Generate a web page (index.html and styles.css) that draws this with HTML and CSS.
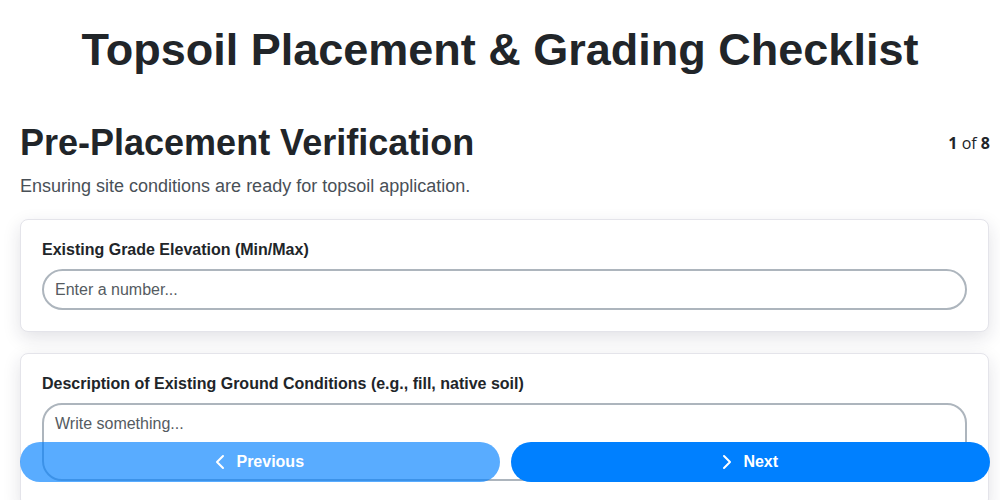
FILE: index.html
```
<!DOCTYPE html>
<html lang="en">
<head>
  <meta charset="UTF-8">
  <meta name="viewport" content="width=device-width, initial-scale=1.0">
  <title>Topsoil Placement &amp; Grading Checklist</title>
  <link rel="stylesheet" href="styles.css">
</head>
<body>
  <h1 class="page-title">Topsoil Placement &amp; Grading Checklist</h1>

  <div class="wizard">
    <!-- Section header -->
    <div class="section-head">
      <h2>Pre-Placement Verification</h2>
      <span class="step-count"><b>1</b> of <b>8</b></span>
    </div>
    <p class="section-desc">Ensuring site conditions are ready for topsoil application.</p>

    <!-- Questions -->
    <div class="card">
      <label for="gradeElevation">Existing Grade Elevation (Min/Max)</label>
      <input type="text" id="gradeElevation" placeholder="Enter a number...">
    </div>

    <div class="card">
      <label for="groundConditions">Description of Existing Ground Conditions (e.g., fill, native soil)</label>
      <textarea id="groundConditions" placeholder="Write something..."></textarea>
    </div>
  </div>

  <!-- Navigation -->
  <div class="nav-buttons">
    <button class="btn btn-prev" disabled>
      <svg width="10" height="16" viewBox="0 0 10 16"><polyline points="8,2 2,8 8,14" fill="none" stroke="#fff" stroke-width="2" stroke-linecap="round" stroke-linejoin="round"/></svg>
      Previous
    </button>
    <button class="btn btn-next">
      <svg width="10" height="16" viewBox="0 0 10 16"><polyline points="2,2 8,8 2,14" fill="none" stroke="#fff" stroke-width="2" stroke-linecap="round" stroke-linejoin="round"/></svg>
      Next
    </button>
  </div>
</body>
</html>
```

FILE: styles.css
```
body {
  font-family: "Liberation Sans", Arial, sans-serif;
  margin: 0;
  background: #fff;
  color: #212529;
}

.page-title {
  text-align: center;
  font-size: 45px;
  margin: 0;
  padding: 25px 0 0;
  line-height: 50px;
}

.wizard {
  margin-top: 46px;
  padding: 0 10px 0 20px;
}

.section-head {
  display: flex;
  justify-content: space-between;
  align-items: center;
}
.section-head h2 {
  font-size: 36px;
  margin: 0;
  line-height: 44px;
}
.step-count {
  font-family: "Open Sans", sans-serif;
  font-size: 16px;
  color: #212529;
}

.section-desc {
  font-size: 18px;
  color: #495057;
  margin: 11px 0 22px;
}

.card {
  background: #fff;
  border: 1px solid #e4e4ea;
  border-radius: 8px;
  padding: 21px;
  margin: 0 1px 21px 0;
  box-shadow: 0 6px 18px rgba(30, 30, 60, 0.13);
}
.card label {
  display: block;
  font-weight: bold;
  font-size: 16px;
  line-height: 18px;
  margin-bottom: 10px;
}

input, textarea {
  width: 100%;
  box-sizing: border-box;
  font-family: "Liberation Sans", Arial, sans-serif;
  font-size: 16px;
  color: #212529;
  border: 2px solid #adb5bd;
  background: #fff;
}
input {
  height: 41px;
  border-radius: 999px;
  padding: 0 11px;
}
textarea {
  height: 78px;
  border-radius: 20px;
  padding: 10px 11px;
  resize: none;
}
::placeholder {
  color: #555b61;
}

.nav-buttons {
  position: fixed;
  left: 20px;
  right: 10px;
  bottom: 18px;
  display: flex;
  gap: 11px;
}
.btn {
  flex: 1;
  height: 40px;
  border: none;
  border-radius: 999px;
  background: #0080ff;
  color: #fff;
  font-family: "Liberation Sans", Arial, sans-serif;
  font-size: 16px;
  font-weight: bold;
  display: flex;
  align-items: center;
  justify-content: center;
  gap: 11px;
}
.btn-prev {
  opacity: 0.65;
}
```
